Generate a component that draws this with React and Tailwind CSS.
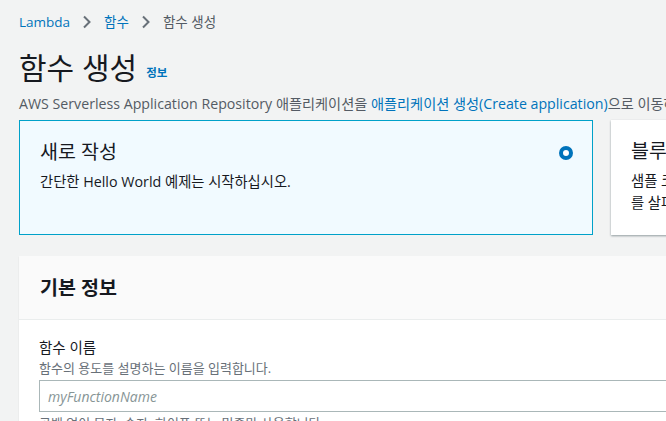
import React from "react";

const font = { fontFamily: '"Open Sans", "Noto Sans CJK KR", sans-serif' };

function Chevron() {
  return (
    <svg width="10" height="14" viewBox="0 0 10 14" className="mx-[12px] shrink-0">
      <path d="M2 1.5 L7.5 7 L2 12.5" fill="none" stroke="#687078" strokeWidth="2" />
    </svg>
  );
}

export default function App() {
  return (
    <div
      className="w-[666px] h-[421px] overflow-hidden bg-[#f2f3f3] text-[#16191f]"
      style={font}
    >
      <div className="w-[1200px] pl-[19px]">
        {/* Breadcrumb */}
        <div className="flex items-center h-[20px] mt-[12px] text-[13.5px]">
          <span className="text-[#0073bb]">Lambda</span>
          <Chevron />
          <span className="text-[#0073bb]">함수</span>
          <Chevron />
          <span className="text-[#545b64]">함수 생성</span>
        </div>

        {/* Title */}
        <div className="flex items-end mt-[18px] h-[36px]">
          <h1 className="text-[30px] leading-[36px] font-normal">함수 생성</h1>
          <span className="ml-[9px] mb-[5px] text-[11.5px] font-bold text-[#0073bb]">정보</span>
        </div>

        <p className="mt-[8px] text-[14.2px] leading-[20px] text-[#545b64] whitespace-nowrap">
          AWS Serverless Application Repository 애플리케이션을{" "}
          <span className="text-[#0073bb]">애플리케이션 생성(Create application)</span>으로 이동하여 시작합니다.
        </p>

        {/* Option cards */}
        <div className="flex gap-[18px] mt-[6px]">
          <div className="w-[574px] h-[115px] shrink-0 border border-[#00a1c9] bg-[#f1faff] px-[20px] pt-[17px] relative">
            <div className="text-[19.5px] leading-[28px]">새로 작성</div>
            <div className="mt-[6px] text-[14.3px] leading-[20px]">간단한 Hello World 예제는 시작하십시오.</div>
            <div className="absolute right-[19px] top-[25px] w-[14px] h-[14px] rounded-full border-[4px] border-[#0073bb] bg-white" />
          </div>
          <div className="w-[574px] h-[115px] shrink-0 bg-white shadow-[0_1px_2px_rgba(0,28,36,0.4)] px-[20px] pt-[17px] relative">
            <div className="text-[19.5px] leading-[28px]">블루프린트 사용</div>
            <div className="mt-[5px] text-[14.3px] leading-[22px] whitespace-nowrap">
              샘플 코드 및 일반 사용 사례에 대한 구성 사전 설정으로 Lambda 애플리케이션
              <br />
              를 살펴봅니다.
            </div>
          </div>
        </div>

        {/* Basic info panel */}
        <div className="mt-[21px] w-[1181px] bg-white shadow-[0_1px_1px_rgba(0,28,36,0.15)]">
          <div className="h-[64px] bg-[#fafafa] border-b border-[#eaeded] px-[21px] flex items-center">
            <h2 className="text-[19.5px] font-bold leading-[26px]">기본 정보</h2>
          </div>
          <div className="px-[20px] pt-[18px]">
            <div className="text-[14.5px] leading-[20px]">함수 이름</div>
            <div className="mt-[1px] text-[13px] leading-[18px] text-[#687078]">
              함수의 용도를 설명하는 이름을 입력합니다.
            </div>
            <div className="mt-[3px] h-[32px] border border-[#aab7b8] flex items-center px-[8px]">
              <span className="italic text-[14px] text-[#879596]">myFunctionName</span>
            </div>
            <div className="mt-[2px] text-[13px] leading-[18px] text-[#687078]">
              공백 없이 문자, 숫자, 하이픈 또는 밑줄만 사용합니다.
            </div>
          </div>
        </div>
      </div>
    </div>
  );
}
